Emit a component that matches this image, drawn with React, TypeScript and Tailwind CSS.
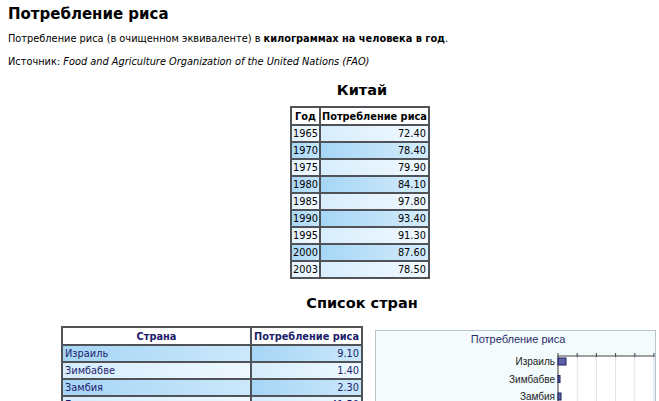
import React from "react";

const china: [string, string][] = [
  ["1965", "72.40"],
  ["1970", "78.40"],
  ["1975", "79.90"],
  ["1980", "84.10"],
  ["1985", "97.80"],
  ["1990", "93.40"],
  ["1995", "91.30"],
  ["2000", "87.60"],
  ["2003", "78.50"],
];

const countries: [string, string][] = [
  ["Израиль", "9.10"],
  ["Зимбабве", "1.40"],
  ["Замбия", "2.30"],
  ["Египет", "41.50"],
];

function RiceChart() {
  // small horizontal bar chart, only top part is visible
  const ticks = [0, 1, 2, 3, 4, 5];
  const bars = [
    { label: "Израиль", w: 8 },
    { label: "Зимбабве", w: 2 },
    { label: "Замбия", w: 3 },
  ];
  return (
    <div className="w-[281px] h-[90px] border border-[#b8c4cc] bg-[#f3fbfd] font-['Liberation_Sans',Arial,sans-serif]">
      <div className="text-center text-[11px] text-[#2c2c6c] mt-[1px] leading-[14px] pl-[5px]">
        Потребление риса
      </div>
      <svg width="281" height="72" className="block">
        <rect x="182" y="10" width="96" height="70" fill="#ffffff" />
        {ticks.map((t) => (
          <g key={t}>
            <line x1={182 + t * 19.2} y1="7" x2={182 + t * 19.2} y2="80" stroke="#dde3e8" />
            <line x1={182 + t * 19.2} y1="7" x2={182 + t * 19.2} y2="11" stroke="#444" />
          </g>
        ))}
        <line x1="182" y1="10" x2="278" y2="10" stroke="#444" />
        <line x1="182" y1="10" x2="182" y2="80" stroke="#444" />
        {bars.map((b, i) => (
          <g key={b.label}>
            <text
              x="179"
              y={19 + i * 17.5}
              textAnchor="end"
              fontSize="10"
              fill="#222"
              fontFamily="Liberation Sans, Arial, sans-serif"
            >
              {b.label}
            </text>
            <rect x="182" y={12 + i * 17.5} width={b.w} height="7" fill="#5a62a8" stroke="#1c1f5a" />
          </g>
        ))}
      </svg>
    </div>
  );
}

export default function App() {
  return (
    <div className="w-[659px] h-[401px] overflow-hidden bg-white">
      <div className="w-[724px] font-['DejaVu_Sans',Verdana,sans-serif] text-[9.8px] text-black">
        <div className="px-2 pt-[3px]">
          <h1 className="text-[15px] font-bold leading-[22px]">Потребление риса</h1>
          <p className="mt-[7px] leading-[14px]">
            Потребление риса (в очищенном эквиваленте) в{" "}
            <b>килограммах на человека в год</b>.
          </p>
          <p className="mt-[9px] leading-[14px]">
            Источник: <i>Food and Agriculture Organization of the United Nations (FAO)</i>
          </p>
        </div>

        <h2 className="text-center text-[14.5px] font-bold leading-[20px] mt-[11px]">Китай</h2>
        <div className="flex justify-center mt-[6px]">
          <table className="border-collapse border-2 border-[#4f5358] ml-[-4px] whitespace-nowrap">
            <thead>
              <tr className="h-[18px] bg-white">
                <th className="border-2 border-[#4f5358] px-[1px] font-bold text-center leading-[13px]">Год</th>
                <th className="border-2 border-[#4f5358] px-[1px] font-bold text-center leading-[13px]">
                  Потребление риса
                </th>
              </tr>
            </thead>
            <tbody>
              {china.map(([y, v], i) => {
                const even = i % 2 === 1;
                return (
                  <tr key={y} className="h-[17px]">
                    <td
                      className={
                        "border-2 border-[#4f5358] px-[1px] leading-[13px] bg-linear-to-r " +
                        (even ? "from-[#a9d7f6] to-[#c4e5fa]" : "from-[#e2f2fd] to-[#f4faff]")
                      }
                    >
                      {y}
                    </td>
                    <td
                      className={
                        "border-2 border-[#4f5358] px-[2px] leading-[13px] text-right bg-linear-to-r " +
                        (even ? "from-[#a6d6f6] to-[#d4ecfc]" : "from-[#d8edfc] to-[#f1f9ff]")
                      }
                    >
                      {v}
                    </td>
                  </tr>
                );
              })}
            </tbody>
          </table>
        </div>

        <h2 className="text-center text-[14.5px] font-bold leading-[20px] mt-[14px]">Список стран</h2>
        <div className="flex items-start ml-[61px] mt-[13px] gap-[12px]">
          <table className="border-collapse border-2 border-[#4f5358] w-[302px] whitespace-nowrap">
            <thead>
              <tr className="h-[18px] bg-white text-[#1d1d6b]">
                <th className="border-2 border-[#4f5358] px-[2px] font-bold text-center leading-[13px] w-[191px]">
                  Страна
                </th>
                <th className="border-2 border-[#4f5358] px-[2px] font-bold text-center leading-[13px]">
                  Потребление риса
                </th>
              </tr>
            </thead>
            <tbody>
              {countries.map(([c, v], i) => {
                const light = i % 2 === 1;
                return (
                  <tr key={c} className="h-[17px] text-[#1d1d6b]">
                    <td
                      className={
                        "border-2 border-[#4f5358] px-[2px] leading-[13px] bg-linear-to-r " +
                        (light ? "from-[#d6edfc] to-[#eef8ff]" : "from-[#a6d5f5] to-[#cbe8fb]")
                      }
                    >
                      {c}
                    </td>
                    <td
                      className={
                        "border-2 border-[#4f5358] px-[2px] leading-[13px] text-right bg-linear-to-r " +
                        (light ? "from-[#d6edfc] to-[#eef8ff]" : "from-[#a6d5f5] to-[#cbe8fb]")
                      }
                    >
                      {v}
                    </td>
                  </tr>
                );
              })}
            </tbody>
          </table>
          <div className="mt-[4px]">
            <RiceChart />
          </div>
        </div>
      </div>
    </div>
  );
}
